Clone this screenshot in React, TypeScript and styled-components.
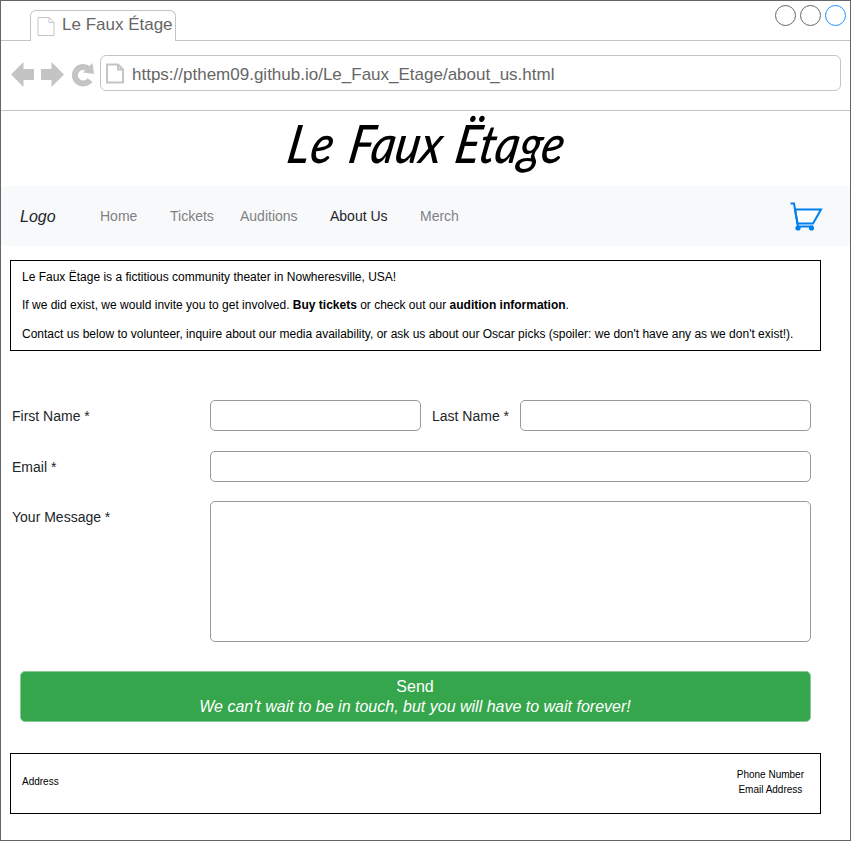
import React from "react";
import styled, { createGlobalStyle } from "styled-components";

const GlobalStyle = createGlobalStyle`
  *, *::before, *::after { box-sizing: border-box; }
  body { margin: 0; background: #fff; font-family: "Liberation Sans", Arial, sans-serif; }
  h1, p { margin: 0; font-weight: normal; }
`;

const Window = styled.div`
  width: 851px;
  height: 841px;
  border: 1px solid #666;
  background: #fff;
  overflow: hidden;
`;

const TabStrip = styled.header`
  display: flex;
  justify-content: space-between;
  height: 40px;
  padding: 4px 4px 0 29px;
  border-bottom: 1px solid #c4c4c4;
`;

const Tab = styled.div`
  display: flex;
  align-items: center;
  width: 146px;
  height: 31px;
  margin-top: 5px;
  padding: 0 0 0 6px;
  gap: 7px;
  border: 1px solid #c4c4c4;
  border-bottom: 0;
  border-radius: 6px 6px 0 0;
  background: #fff;
  color: #666;
  font-size: 17px;
  line-height: 20px;
  white-space: nowrap;
`;

const TabTitle = styled.span`
  margin-top: -2px;
`;

const WindowControls = styled.div`
  display: flex;
  gap: 4px;
`;

const Control = styled.span<{ $color: string }>`
  width: 21px;
  height: 21px;
  border: 1px solid ${(p) => p.$color};
  border-radius: 50%;
`;

const Toolbar = styled.div`
  display: flex;
  align-items: flex-start;
  height: 70px;
  padding: 14px 9px 0 10px;
  border-bottom: 1px solid #c4c4c4;
`;

const HistoryIcons = styled.svg`
  flex: none;
  width: 89px;
  height: 36px;
`;

const AddressBar = styled.div`
  flex: 1;
  display: flex;
  align-items: center;
  gap: 8px;
  height: 36px;
  padding: 0 5px;
  border: 1px solid #c4c4c4;
  border-radius: 6px;
  color: #666;
  font-size: 17px;
  line-height: 20px;
`;

const Url = styled.span`
  padding-top: 3px;
`;

const Masthead = styled.div`
  display: flex;
  justify-content: center;
  align-items: center;
  height: 75px;
`;

const Wordmark = styled.h1`
  display: flex;
  gap: 15px;
  color: #000;
  font-family: Lato, sans-serif;
  font-size: 53px;
  font-style: italic;
  font-weight: 500;
  line-height: 60px;
  white-space: nowrap;
  transform: translate(2px, -6px) skewX(-10deg) scaleX(0.88);
`;

const WideWord = styled.span`
  letter-spacing: 3px;
  margin-right: 0;
`;

const Nav = styled.nav`
  display: grid;
  grid-template-columns: 80px 70px 70px 90px 90px 1fr 33px;
  align-items: center;
  height: 60px;
  margin: 0 -1px;
  padding: 0 27px 0 20px;
  border: solid #b2b3b5;
  border-width: 0 1px;
  background: #f8f9fb;
`;

const Brand = styled.span`
  margin-left: -1px;
  padding-top: 2px;
  color: #212529;
  font-size: 16px;
  font-style: italic;
`;

const NavLink = styled.span<{ $active?: boolean }>`
  margin-left: -1px;
  color: ${(p) => (p.$active ? "#212529" : "#808182")};
  font-size: 14px;
  white-space: nowrap;
`;

const CartIcon = styled.svg`
  grid-column: 7;
  width: 33px;
  height: 29px;
`;

const Intro = styled.section`
  display: flex;
  flex-direction: column;
  width: 811px;
  height: 91px;
  margin: 14px 0 0 9px;
  padding: 9px 11px;
  border: 1px solid #000;
  color: #000;
  font-size: 12px;
  line-height: 14px;
  gap: 14.4px;
  white-space: nowrap;
`;

const ContactForm = styled.div`
  display: grid;
  grid-template-columns: 198px 211px 99px 291px;
  grid-template-rows: 31px 31px 141px;
  row-gap: 20px;
  margin: 49px 0 0 11px;
`;

const Label = styled.label<{ $indent?: boolean }>`
  padding: ${(p) => (p.$indent ? "8px 0 0 11px" : "8px 0 0")};
  color: #212529;
  font-size: 14px;
  line-height: 16px;
`;

const Field = styled.input<{ $wide?: boolean }>`
  width: 100%;
  height: 31px;
  grid-column: ${(p) => (p.$wide ? "2 / 5" : "auto")};
  border: 1px solid #999;
  border-radius: 5px;
  outline: none;
  background: #fff;
`;

const MessageField = styled.textarea`
  grid-column: 2 / 5;
  width: 100%;
  height: 141px;
  margin-top: -1px;
  border: 1px solid #999;
  border-radius: 5px;
  outline: none;
  resize: none;
  background: #fff;
`;

const MessageLabel = styled(Label)`
  padding-top: 7px;
`;

const SendButton = styled.button`
  display: flex;
  flex-direction: column;
  align-items: center;
  justify-content: center;
  width: 791px;
  height: 51px;
  margin: 28px 0 0 19px;
  padding: 0 1px 0 0;
  border: 1px solid #88cb97;
  border-radius: 5px;
  background: #35a64c;
  color: #fff;
  font-family: inherit;
  font-size: 16px;
  line-height: 20px;
`;

const Footer = styled.footer`
  display: flex;
  justify-content: space-between;
  align-items: center;
  width: 811px;
  height: 61px;
  margin: 31px 0 0 9px;
  padding: 0 16px 3px 11px;
  border: 1px solid #000;
  color: #000;
  font-size: 10px;
  line-height: 15px;
`;

const Address = styled.span`
  padding-bottom: 2px;
`;

const ContactLines = styled.div`
  text-align: center;
`;

const PageSvg = styled.svg`
  flex: none;
  width: 18px;
  height: 21px;
`;

function PageIcon({ weight }: { weight: number }) {
  return (
    <PageSvg viewBox="0 0 18 21" fill="none" stroke="#c4c4c4" strokeWidth={weight}>
      <path d="M1 1.500h11l5 5v13H1zM12 1.500v5h5" />
    </PageSvg>
  );
}

const links = ["Home", "Tickets", "Auditions", "About Us", "Merch"];

export default function App() {
  return (
    <>
      <GlobalStyle />
      <Window>
        <TabStrip>
          <Tab>
            <PageIcon weight={1} />
            <TabTitle>Le Faux Étage</TabTitle>
          </Tab>
          <WindowControls>
            <Control $color="#666" />
            <Control $color="#666" />
            <Control $color="#1e90ff" />
          </WindowControls>
        </TabStrip>
        <Toolbar>
          <HistoryIcons viewBox="0 0 89 36" fill="#c4c4c4">
            <path d="M0 19.500 12.500 7v7H23v11H12.500v7z" />
            <path d="M53 19.500 40.500 7v7H30v11h10.500v7z" />
            <path d="M79 25A8.300 8.300 0 1 1 77.500 13.800" fill="none" stroke="#c4c4c4" strokeWidth="6" />
            <path d="M81.500 8 83 19 72 17.500z" />
          </HistoryIcons>
          <AddressBar>
            <PageIcon weight={2} />
            <Url>https://pthem09.github.io/Le_Faux_Etage/about_us.html</Url>
          </AddressBar>
        </Toolbar>
        <Masthead>
          <Wordmark>
            <WideWord>Le</WideWord> <span>Faux</span> <span>Ëtage</span>
          </Wordmark>
        </Masthead>
        <Nav>
          <Brand>Logo</Brand>
          {links.map((name) => (
            <NavLink key={name} $active={name === "About Us"}>
              {name}
            </NavLink>
          ))}
          <CartIcon viewBox="0 0 33 29" fill="none" stroke="#0080f0" strokeWidth="2">
            <path d="M5 7.500H31L23 21.500H7.500z" fill="#fff" />
            <path d="M.5 1.500H4L8 24.500H23" />
            <circle cx="8" cy="26" r="2.600" fill="#0080f0" stroke="none" />
            <circle cx="21.500" cy="26" r="2.600" fill="#0080f0" stroke="none" />
          </CartIcon>
        </Nav>
        <Intro>
          <p>Le Faux Ëtage is a fictitious community theater in Nowheresville, USA!</p>
          <p>
            If we did exist, we would invite you to get involved. <b>Buy tickets</b> or check out our{" "}
            <b>audition information</b>.
          </p>
          <p>
            Contact us below to volunteer, inquire about our media availability, or ask us about our Oscar
            picks (spoiler: we don't have any as we don't exist!).
          </p>
        </Intro>
        <ContactForm>
          <Label htmlFor="first">First Name *</Label>
          <Field id="first" />
          <Label htmlFor="last" $indent>Last Name *</Label>
          <Field id="last" />
          <Label htmlFor="email">Email *</Label>
          <Field id="email" $wide />
          <MessageLabel htmlFor="message">Your Message *</MessageLabel>
          <MessageField id="message" />
        </ContactForm>
        <SendButton>
          <span>Send</span>
          <em>We can't wait to be in touch, but you will have to wait forever!</em>
        </SendButton>
        <Footer>
          <Address>Address</Address>
          <ContactLines>
            <p>Phone Number</p>
            <p>Email Address</p>
          </ContactLines>
        </Footer>
      </Window>
    </>
  );
}
